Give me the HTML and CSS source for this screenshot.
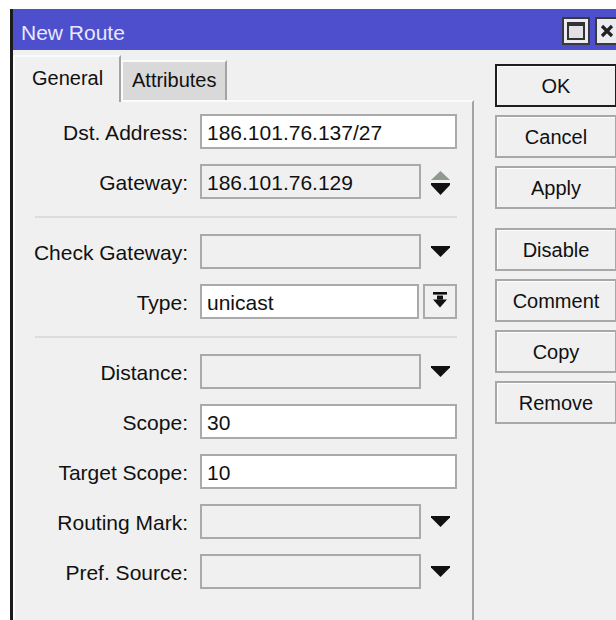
FILE: index.html
```html
<!DOCTYPE html>
<html>
<head>
<meta charset="utf-8">
<title>New Route</title>
<link rel="stylesheet" href="styles.css">
</head>
<body>
<div class="window">
  <div class="titlebar">
    <span class="title">New Route</span>
    <div class="tb-buttons">
      <span class="tb-btn">
        <svg width="20" height="20" viewBox="0 0 20 20"><rect x="2" y="2" width="16" height="16" fill="#e2e2e6" stroke="#333" stroke-width="2"/><rect x="2" y="2" width="16" height="3" fill="#333"/></svg>
      </span>
      <span class="tb-btn">
        <svg width="20" height="20" viewBox="0 0 20 20"><path d="M3 5 L13 15 M13 5 L3 15" stroke="#222" stroke-width="3.2" fill="none"/></svg>
      </span>
    </div>
  </div>

  <div class="client">
    <div class="tabs-area">
      <div class="tabs">
        <div class="tab active">General</div>
        <div class="tab">Attributes</div>
      </div>

      <div class="panel">
        <div class="form">
          <div class="row">
            <span class="label">Dst. Address:</span>
            <div class="cell"><div class="field white">186.101.76.137/27</div></div>
          </div>
          <div class="row">
            <span class="label">Gateway:</span>
            <div class="cell">
              <div class="field short">186.101.76.129</div>
              <div class="trail">
                <svg class="spin" width="19" height="24" viewBox="0 0 19 24"><polygon points="0,9 19,9 9.5,0" fill="#8d9a8d"/><polygon points="0,12 19,12 19,14 9.5,24 0,14" fill="#111"/></svg>
              </div>
            </div>
          </div>

          <div class="sep"></div>

          <div class="row">
            <span class="label">Check Gateway:</span>
            <div class="cell">
              <div class="field short"></div>
              <div class="trail"><svg width="19" height="11" viewBox="0 0 19 11"><polygon points="0,0 19,0 19,1.5 9.5,11 0,1.5" fill="#111"/></svg></div>
            </div>
          </div>
          <div class="row">
            <span class="label">Type:</span>
            <div class="cell">
              <div class="field white type">unicast</div>
              <div class="drop-btn">
                <svg width="14" height="16" viewBox="0 0 14 16"><rect x="0" y="0" width="14" height="2.6" fill="#111"/><rect x="4" y="3.6" width="6" height="4" fill="#111"/><polygon points="0,7.4 14,7.4 7,15.4" fill="#111"/></svg>
              </div>
            </div>
          </div>

          <div class="sep"></div>

          <div class="row">
            <span class="label">Distance:</span>
            <div class="cell">
              <div class="field short"></div>
              <div class="trail"><svg width="19" height="11" viewBox="0 0 19 11"><polygon points="0,0 19,0 19,1.5 9.5,11 0,1.5" fill="#111"/></svg></div>
            </div>
          </div>
          <div class="row">
            <span class="label">Scope:</span>
            <div class="cell"><div class="field white">30</div></div>
          </div>
          <div class="row">
            <span class="label">Target Scope:</span>
            <div class="cell"><div class="field white">10</div></div>
          </div>
          <div class="row">
            <span class="label">Routing Mark:</span>
            <div class="cell">
              <div class="field short"></div>
              <div class="trail"><svg width="19" height="11" viewBox="0 0 19 11"><polygon points="0,0 19,0 19,1.5 9.5,11 0,1.5" fill="#111"/></svg></div>
            </div>
          </div>
          <div class="row">
            <span class="label">Pref. Source:</span>
            <div class="cell">
              <div class="field short"></div>
              <div class="trail"><svg width="19" height="11" viewBox="0 0 19 11"><polygon points="0,0 19,0 19,1.5 9.5,11 0,1.5" fill="#111"/></svg></div>
            </div>
          </div>
        </div>
      </div>
    </div>

    <div class="actions">
      <div class="btn default">OK</div>
      <div class="btn">Cancel</div>
      <div class="btn">Apply</div>
      <div class="btn group-start">Disable</div>
      <div class="btn">Comment</div>
      <div class="btn">Copy</div>
      <div class="btn">Remove</div>
    </div>
  </div>
</div>
</body>
</html>
```

FILE: styles.css
```css
html, body {
  margin: 0;
  padding: 0;
  overflow: hidden;
  background: #ffffff;
}

body {
  font-family: "Liberation Sans", Arial, sans-serif;
  font-size: 20px;
  color: #111;
}

/* dialog frame */
.window {
  margin: 9px 0 0 10px;
  width: 613px;
  height: 611px;
  border-left: 3px solid #1c1c1c;
  background: #f0f0f0;
  display: flex;
  flex-direction: column;
}

.titlebar {
  height: 41px;
  flex: none;
  background: #4d4fcc;
  display: flex;
  align-items: center;
  padding-left: 8px;
}

.title {
  flex: 1;
  color: #e8e8ff;
  font-size: 21px;
  padding-top: 6px;
}

.tb-buttons {
  display: flex;
  gap: 5px;
  margin-right: 3px;
  padding-top: 3px;
}

.tb-btn {
  width: 28px;
  height: 28px;
  box-sizing: border-box;
  border: 2px solid #3a3a3a;
  background: #ececf0;
  display: flex;
  align-items: center;
  justify-content: center;
}

.client {
  flex: 1;
  display: flex;
}

/* tab strip + page */
.tabs-area {
  width: 461px;
  display: flex;
  flex-direction: column;
}

.tabs {
  height: 50px;
  flex: none;
  display: flex;
  align-items: flex-end;
}

.tab {
  box-sizing: border-box;
  height: 40px;
  width: 106px;
  padding: 0 0 1px 9px;
  border-top: 2px solid #fbfbfb;
  border-left: 2px solid #fbfbfb;
  border-right: 2px solid #a3a3a3;
  background: #d9d9d9;
  display: flex;
  align-items: center;
  white-space: nowrap;
}

.tab.active {
  position: relative;
  width: 108px;
  height: 47px;
  margin-bottom: -2px;
  padding: 0 0 3px 17px;
  background: #f0f0f0;
}

.panel {
  flex: 1;
  border-top: 2px solid #fbfbfb;
  border-left: 2px solid #fbfbfb;
  border-right: 2px solid #a3a3a3;
}

.form {
  padding-top: 12px;
  display: flex;
  flex-direction: column;
  font-size: 21px;
}

.row {
  display: grid;
  grid-template-columns: 173px 257px;
  column-gap: 12px;
  align-items: center;
  height: 35px;
  margin-bottom: 15px;
}

.label {
  text-align: right;
  white-space: nowrap;
  padding-top: 2px;
}

.cell {
  display: flex;
  align-items: center;
  height: 35px;
}

.field {
  box-sizing: border-box;
  width: 257px;
  height: 35px;
  border: 2px solid #aaaaaa;
  background: #f0f0f0;
  padding: 2px 5px 0;
  display: flex;
  align-items: center;
  white-space: nowrap;
}

.field.white {
  background: #ffffff;
}

.field.short {
  width: 221px;
}

.field.type {
  width: 219px;
}

.trail {
  width: 36px;
  display: flex;
  align-items: center;
  padding-left: 10px;
  box-sizing: border-box;
}

.spin {
  margin-top: 3px;
}

.drop-btn {
  box-sizing: border-box;
  width: 34px;
  height: 35px;
  margin-left: 4px;
  border: 2px solid #aaaaaa;
  background: #f0f0f0;
  display: flex;
  align-items: center;
  justify-content: center;
  padding-bottom: 3px;
}

.sep {
  height: 2px;
  width: 422px;
  margin: 2px 0 16px 20px;
  background: #dcdcdc;
}

/* command buttons */
.actions {
  flex: 1;
  padding: 14px 9px 0 21px;
  display: flex;
  flex-direction: column;
  gap: 8px;
}

.btn {
  box-sizing: border-box;
  height: 43px;
  border: 2px solid #a8a8a8;
  box-shadow: inset 1px 1px 0 #fdfdfd;
  background: #f0f0f0;
  display: flex;
  align-items: center;
  justify-content: center;
  padding-top: 1px;
}

.btn.default {
  border-color: #1e1e1e;
}

.btn.group-start {
  margin-top: 11px;
}
```
